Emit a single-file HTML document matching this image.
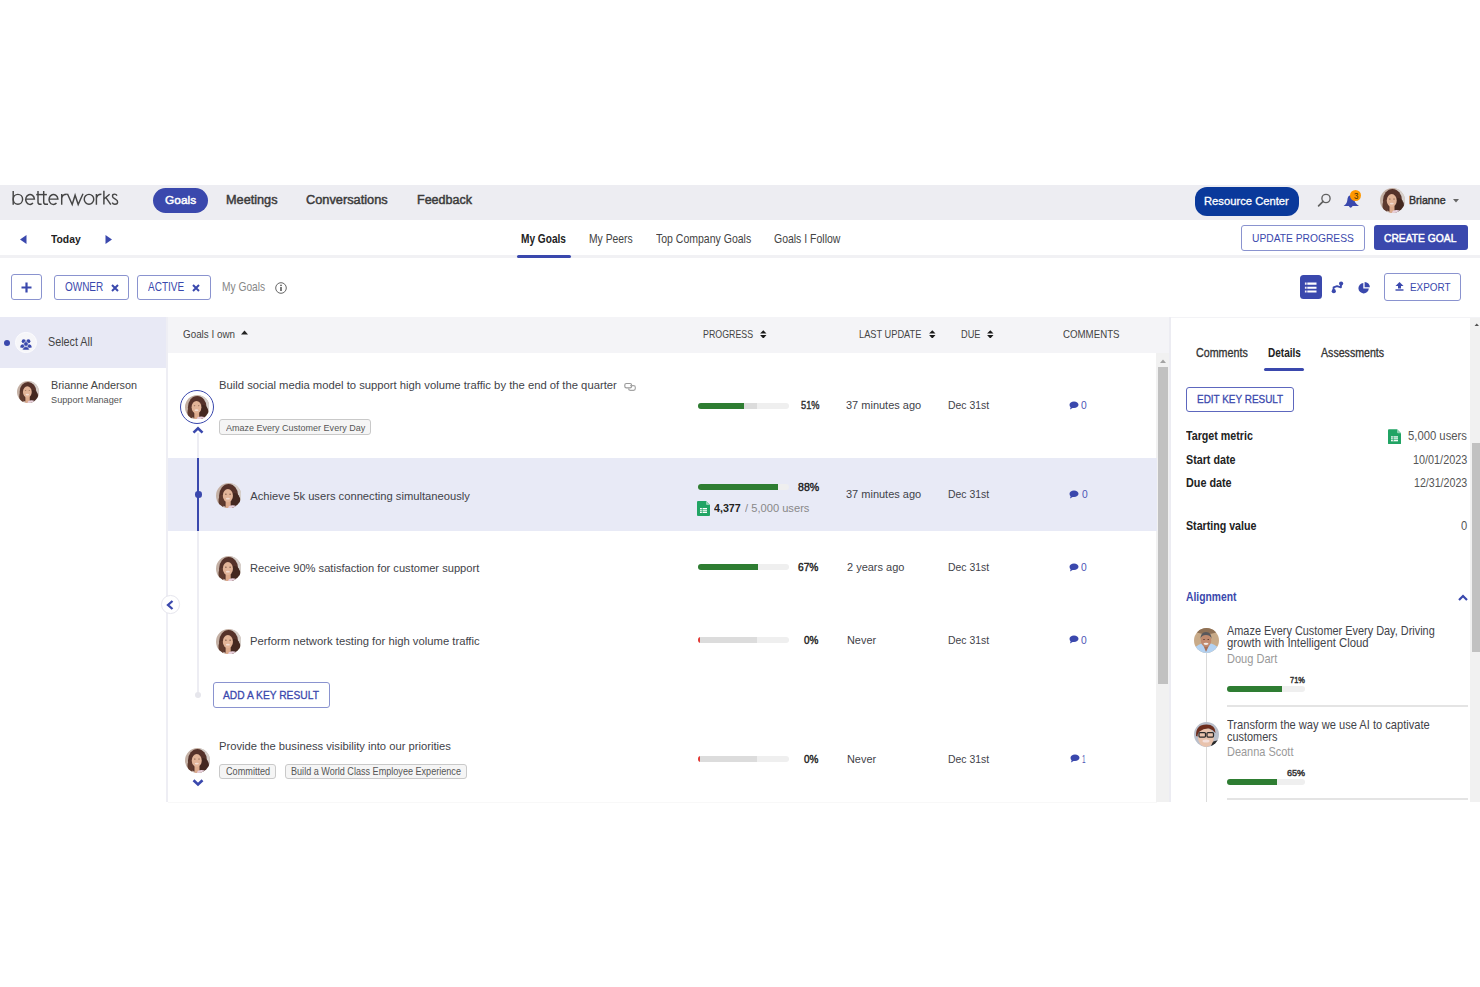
<!DOCTYPE html>
<html><head><meta charset="utf-8"><title>Betterworks Goals</title>
<style>
html,body{margin:0;padding:0;width:1480px;height:987px;overflow:hidden;background:#fff;}
body{position:relative;font-family:"Liberation Sans",sans-serif;}
.t{position:absolute;white-space:nowrap;line-height:1;}
</style></head><body>
<div style="position:absolute;left:0px;top:185px;width:1480px;height:35px;background:#ededf2"></div>
<svg style="position:absolute;left:0;top:185px" width="130" height="35" viewBox="0 185 130 35"><g fill="none" stroke="#454545" stroke-width="1.45" stroke-linecap="butt"><path d="M13.2 190.9V204.8"/><ellipse cx="17.9" cy="199.3" rx="4.7" ry="4.95"/><path d="M25.7 199.1H34.4A4.35 4.95 0 1 0 33 203.1"/><path d="M38 191V202.2Q38 204.3 40.3 204.3H41.6"/><path d="M43.7 191V202.2Q43.7 204.3 46 204.3H48"/><path d="M36.2 194.6H46.9"/><path d="M49 199.1H57.9A4.45 4.95 0 1 0 56.5 203.1"/><path d="M61.7 194V204.8M61.7 198.4Q62.2 194.3 66.8 194.3"/><path d="M67.4 193.8L72.2 204.5L75.1 195.2L78.2 204.5L83 193.8" stroke-linejoin="miter"/><ellipse cx="89" cy="199.3" rx="4.75" ry="4.95"/><path d="M96.4 194V204.8M96.4 198.4Q96.9 194.3 101.4 194.3"/><path d="M103.9 190.8V204.6M109.6 194.2L104.3 198.8M106 197.6L110.8 204.6"/><path d="M117 195.6Q116.2 194.1 114.6 194.1Q112.4 194.1 112.5 196.2Q112.6 197.6 114.6 198.7L116 199.5Q117.8 200.6 117.6 202.4Q117.3 204.3 114.9 204.3Q113 204.3 112.2 202.6"/></g></svg>
<div style="position:absolute;left:153px;top:188px;width:55px;height:25px;background:#3a48ad;border-radius:13px"></div>
<div class="t" style="left:164.82px;top:193.91px;font-size:11.77px;-webkit-text-stroke:0.45px #fff;color:#fff;transform:scaleX(1.0137);transform-origin:0 0;">Goals</div>
<div class="t" style="left:225.62px;top:194.40px;font-size:12.21px;-webkit-text-stroke:0.45px #3b3b3b;color:#3b3b3b;transform:scaleX(1.0399);transform-origin:0 0;">Meetings</div>
<div class="t" style="left:306.43px;top:194.30px;font-size:12.21px;-webkit-text-stroke:0.45px #3b3b3b;color:#3b3b3b;transform:scaleX(1.0478);transform-origin:0 0;">Conversations</div>
<div class="t" style="left:417.23px;top:194.30px;font-size:12.21px;-webkit-text-stroke:0.45px #3b3b3b;color:#3b3b3b;transform:scaleX(1.0240);transform-origin:0 0;">Feedback</div>
<div style="position:absolute;left:1195px;top:187px;width:104px;height:29px;background:#0a399b;border-radius:12px"></div>
<div class="t" style="left:1204.45px;top:195.63px;font-size:11.34px;-webkit-text-stroke:0.3px #fff;color:#fff;transform:scaleX(0.9906);transform-origin:0 0;">Resource Center</div>
<svg style="position:absolute;left:1316px;top:192px" width="16" height="16" viewBox="0 0 16 16"><circle cx="10" cy="6.5" r="4.1" fill="none" stroke="#616161" stroke-width="1.35"/><path d="M7.1 9.4L2.6 13.9" stroke="#616161" stroke-width="1.7" stroke-linecap="round"/></svg>
<svg style="position:absolute;left:1343px;top:193px" width="17" height="17" viewBox="0 0 17 17"><path d="M7.5 2.2C5.6 2.4 4.6 4.2 4.4 6.5C4.2 9.2 3.6 11 0.6 13.1H16C13 11 11.6 9.2 11.2 6.6C10.9 4.3 9.6 2.1 7.5 2.2Z" fill="#3a48ad"/><path d="M5.8 13.1Q7.6 16.5 9.6 13.1Z" fill="#3a48ad"/></svg>
<div style="position:absolute;left:1350.3px;top:190.4px;width:11px;height:11px;background:#ff9800;border-radius:50%"></div>
<div class="t" style="left:1354.00px;top:191.88px;font-size:8.43px;color:#4a3000;transform:scaleX(0.9404);transform-origin:0 0;">3</div>
<svg style="position:absolute;left:1380px;top:188px" width="25" height="25" viewBox="0 0 100 100"><defs><clipPath id="av1"><circle cx="50" cy="50" r="50"/></clipPath></defs><g clip-path="url(#av1)"><rect width="100" height="100" fill="#c4b0a4"/><rect x="60" width="40" height="100" fill="#d6cfca"/><ellipse cx="50" cy="50" rx="38" ry="46" fill="#55322a"/><ellipse cx="72" cy="70" rx="24" ry="30" fill="#442820"/><ellipse cx="22" cy="72" rx="12" ry="26" fill="#5e3a2e"/><path d="M38 70H58V100H38Z" fill="#dcaa8c"/><ellipse cx="47" cy="50" rx="20" ry="26" fill="#e2b498"/><ellipse cx="39" cy="44" rx="3.5" ry="2" fill="#85604e"/><ellipse cx="56" cy="44" rx="3.5" ry="2" fill="#85604e"/><ellipse cx="47" cy="62" rx="8" ry="3.5" fill="#f2dcd2"/><ellipse cx="66" cy="100" rx="18" ry="12" fill="#e8d0dc"/></g></svg>
<div class="t" style="left:1409.22px;top:194.19px;font-size:11.63px;-webkit-text-stroke:0.45px #333;color:#333;transform:scaleX(0.9124);transform-origin:0 0;">Brianne</div>
<svg style="position:absolute;left:1453px;top:199px" width="6" height="4" viewBox="0 0 6 4"><path d="M0 0H6L3 3.5Z" fill="#666"/></svg>
<div style="position:absolute;left:0px;top:220px;width:1480px;height:35px;background:#fff"></div>
<div style="position:absolute;left:0px;top:255px;width:1480px;height:3px;background:#f1f1f4"></div>
<svg style="position:absolute;left:20px;top:235px" width="7" height="9" viewBox="0 0 7 9"><path d="M6.5 0V9L0 4.5Z" fill="#3a48ad"/></svg>
<div class="t" style="left:50.70px;top:233.83px;font-size:11.34px;font-weight:700;color:#222;transform:scaleX(0.9128);transform-origin:0 0;">Today</div>
<svg style="position:absolute;left:105px;top:234.5px" width="7" height="9" viewBox="0 0 7 9"><path d="M0.5 0V9L7 4.5Z" fill="#3a48ad"/></svg>
<div class="t" style="left:521.40px;top:233.07px;font-size:12.06px;font-weight:700;color:#222;transform:scaleX(0.8392);transform-origin:0 0;">My Goals</div>
<div class="t" style="left:589.30px;top:233.07px;font-size:12.06px;color:#444;transform:scaleX(0.8574);transform-origin:0 0;">My Peers</div>
<div class="t" style="left:655.70px;top:233.07px;font-size:12.06px;color:#444;transform:scaleX(0.8719);transform-origin:0 0;">Top Company Goals</div>
<div class="t" style="left:774.00px;top:233.07px;font-size:12.06px;color:#444;transform:scaleX(0.8694);transform-origin:0 0;">Goals I Follow</div>
<div style="position:absolute;left:517px;top:255px;width:54px;height:3px;background:#3a48ad;border-radius:2px"></div>
<div style="position:absolute;left:1241px;top:225px;width:124px;height:26px;border:1.9px solid #8a93cf;border-radius:3px;box-sizing:border-box;background:#fff"></div>
<div class="t" style="left:1252.00px;top:231.91px;font-size:11.77px;color:#3a48ad;transform:scaleX(0.8725);transform-origin:0 0;">UPDATE PROGRESS</div>
<div style="position:absolute;left:1374px;top:225px;width:94px;height:25px;background:#3a48ad;border-radius:3px"></div>
<div class="t" style="left:1384.25px;top:231.91px;font-size:11.77px;-webkit-text-stroke:0.5px #fff;color:#fff;transform:scaleX(0.8747);transform-origin:0 0;">CREATE GOAL</div>
<div style="position:absolute;left:11px;top:274px;width:31px;height:26px;border:1.8px solid #8a93cf;border-radius:3px;box-sizing:border-box"></div>
<svg style="position:absolute;left:21px;top:282px" width="11" height="11" viewBox="0 0 11 11"><path d="M5.5 0.5V10.5M0.5 5.5H10.5" stroke="#3a48ad" stroke-width="2.2"/></svg>
<div style="position:absolute;left:54px;top:275px;width:75px;height:25px;border:1.8px solid #8a93cf;border-radius:3px;box-sizing:border-box"></div>
<div class="t" style="left:64.60px;top:280.97px;font-size:12.06px;color:#3a48ad;transform:scaleX(0.8278);transform-origin:0 0;">OWNER</div>
<svg style="position:absolute;left:110.5px;top:284px" width="8" height="8" viewBox="0 0 8 8"><path d="M1 1L7 7M7 1L1 7" stroke="#3a48ad" stroke-width="2"/></svg>
<div style="position:absolute;left:136.5px;top:275px;width:74px;height:25px;border:1.8px solid #8a93cf;border-radius:3px;box-sizing:border-box"></div>
<div class="t" style="left:147.50px;top:280.97px;font-size:12.06px;color:#3a48ad;transform:scaleX(0.8312);transform-origin:0 0;">ACTIVE</div>
<svg style="position:absolute;left:191.5px;top:284px" width="8" height="8" viewBox="0 0 8 8"><path d="M1 1L7 7M7 1L1 7" stroke="#3a48ad" stroke-width="2"/></svg>
<div class="t" style="left:221.80px;top:280.97px;font-size:12.06px;color:#888;transform:scaleX(0.8476);transform-origin:0 0;">My Goals</div>
<svg style="position:absolute;left:275px;top:282px" width="12" height="12" viewBox="0 0 12 12"><circle cx="6" cy="6" r="5.3" fill="none" stroke="#666" stroke-width="1"/><rect x="5.3" y="5" width="1.4" height="4" fill="#444"/><rect x="5.3" y="2.7" width="1.4" height="1.4" fill="#444"/></svg>
<div style="position:absolute;left:1299.5px;top:275.2px;width:22.5px;height:23.6px;background:#3a48ad;border-radius:3.5px"></div>
<svg style="position:absolute;left:1296px;top:272px" width="30" height="30" viewBox="1296 272 30 30"><path d="M1307.3 283.6H1316.5M1307.3 287.7H1316.5M1307.3 291.5H1316.5" stroke="#fff" stroke-width="2.1"/><path d="M1304.9 283.6H1306.6M1304.9 287.7H1306.6M1304.9 291.5H1306.6" stroke="#f3eef5" stroke-width="2.1"/></svg>
<svg style="position:absolute;left:1326px;top:276px" width="22" height="22" viewBox="1326 276 22 22"><circle cx="1333.8" cy="291.2" r="2.1" fill="#3a48ad"/><circle cx="1341.1" cy="283.6" r="2.1" fill="#3a48ad"/><path d="M1333.6 291V287.3L1337 286.2L1340.9 287.3V283.8" stroke="#3a48ad" stroke-width="1.9" fill="none" stroke-linejoin="round"/></svg>
<svg style="position:absolute;left:1354px;top:278px" width="20" height="20" viewBox="1354 278 20 20"><path d="M1363.3 283A5.2 5.2 0 1 0 1368.8 288.5H1363.3Z" fill="#3a48ad"/><path d="M1364.6 281.9A5.3 5.3 0 0 1 1369.9 287.2H1364.6Z" fill="#3a48ad"/></svg>
<div style="position:absolute;left:1384px;top:273px;width:77px;height:27.5px;border:1.8px solid #8a93cf;border-radius:3px;box-sizing:border-box"></div>
<svg style="position:absolute;left:1394.6px;top:282.4px" width="9" height="9" viewBox="0 0 9 9"><path d="M4.5 0L8.5 4H6V6.5H3V4H0.5Z" fill="#3a48ad"/><rect x="0.5" y="7.3" width="8" height="1.4" fill="#3a48ad"/></svg>
<div class="t" style="left:1410.40px;top:281.19px;font-size:11.63px;color:#3a48ad;transform:scaleX(0.8526);transform-origin:0 0;">EXPORT</div>
<div style="position:absolute;left:0px;top:317px;width:167px;height:485px;background:#fff"></div>
<div style="position:absolute;left:0px;top:317px;width:167px;height:50.8px;background:#e8e9f5"></div>
<div style="position:absolute;left:166px;top:317px;width:2px;height:485px;background:#eeeef4"></div>
<div style="position:absolute;left:3.7px;top:340px;width:6.4px;height:6.4px;background:#3a48ad;border-radius:50%"></div>
<div style="position:absolute;left:15px;top:331.8px;width:21.6px;height:21.6px;background:#f6f6f9;border-radius:50%;border:1.2px solid #fdfdff;box-sizing:border-box"></div>
<svg style="position:absolute;left:15px;top:332px" width="22" height="22" viewBox="15 332 22 22"><g fill="#3a48ad"><circle cx="23.7" cy="341.3" r="2.0"/><circle cx="28.4" cy="341.3" r="2.0"/><path d="M20.2 347.4Q20.4 344.2 23.2 344.2L25 345.2L23.5 348Z"/><path d="M31.7 347.4Q31.5 344.2 28.7 344.2L26.9 345.2L28.4 348Z"/><circle cx="25.95" cy="344.0" r="2.3" stroke="#f6f6f9" stroke-width="0.6"/><path d="M22.6 350Q22.8 346.6 25.95 346.6Q29.1 346.6 29.3 350Z" stroke="#f6f6f9" stroke-width="0.5"/></g></svg>
<div class="t" style="left:47.80px;top:336.32px;font-size:12.35px;color:#444;transform:scaleX(0.8733);transform-origin:0 0;">Select All</div>
<svg style="position:absolute;left:16.5px;top:381px" width="22" height="22" viewBox="0 0 100 100"><defs><clipPath id="av2"><circle cx="50" cy="50" r="50"/></clipPath></defs><g clip-path="url(#av2)"><rect width="100" height="100" fill="#c4b0a4"/><rect x="60" width="40" height="100" fill="#d6cfca"/><ellipse cx="50" cy="50" rx="38" ry="46" fill="#55322a"/><ellipse cx="72" cy="70" rx="24" ry="30" fill="#442820"/><ellipse cx="22" cy="72" rx="12" ry="26" fill="#5e3a2e"/><path d="M38 70H58V100H38Z" fill="#dcaa8c"/><ellipse cx="47" cy="50" rx="20" ry="26" fill="#e2b498"/><ellipse cx="39" cy="44" rx="3.5" ry="2" fill="#85604e"/><ellipse cx="56" cy="44" rx="3.5" ry="2" fill="#85604e"/><ellipse cx="47" cy="62" rx="8" ry="3.5" fill="#f2dcd2"/><ellipse cx="66" cy="100" rx="18" ry="12" fill="#e8d0dc"/></g></svg>
<div class="t" style="left:51.00px;top:379.19px;font-size:11.63px;color:#444;transform:scaleX(0.9303);transform-origin:0 0;">Brianne Anderson</div>
<div class="t" style="left:51.00px;top:394.93px;font-size:9.74px;color:#555;transform:scaleX(0.9438);transform-origin:0 0;">Support Manager</div>
<div style="position:absolute;left:168px;top:317px;width:1002px;height:36px;background:#f4f4f7"></div>
<div style="position:absolute;left:168px;top:353px;width:989px;height:449px;background:#fff"></div>
<div class="t" style="left:183.00px;top:327.89px;font-size:11.63px;color:#444;transform:scaleX(0.8470);transform-origin:0 0;">Goals I own</div>
<svg style="position:absolute;left:241px;top:330px" width="7" height="5" viewBox="0 0 7 5"><path d="M0 4.5H7L3.5 0.5Z" fill="#222"/></svg>
<div class="t" style="left:703.20px;top:329.10px;font-size:11.19px;color:#444;transform:scaleX(0.7895);transform-origin:0 0;">PROGRESS</div>
<svg style="position:absolute;left:760.1px;top:329.6px" width="6.6" height="8.8" viewBox="0 0 6.6 8.8"><path d="M0.1 3.6L3.3 0.2L6.5 3.6Z M0.1 5.0L3.3 8.6L6.5 5.0Z" fill="#1a1a1a"/></svg>
<div class="t" style="left:859.40px;top:329.10px;font-size:11.19px;color:#444;transform:scaleX(0.8266);transform-origin:0 0;">LAST UPDATE</div>
<svg style="position:absolute;left:929px;top:329.6px" width="6.6" height="8.8" viewBox="0 0 6.6 8.8"><path d="M0.1 3.6L3.3 0.2L6.5 3.6Z M0.1 5.0L3.3 8.6L6.5 5.0Z" fill="#1a1a1a"/></svg>
<div class="t" style="left:961.10px;top:329.10px;font-size:11.19px;color:#444;transform:scaleX(0.8215);transform-origin:0 0;">DUE</div>
<svg style="position:absolute;left:987.3px;top:329.6px" width="6.6" height="8.8" viewBox="0 0 6.6 8.8"><path d="M0.1 3.6L3.3 0.2L6.5 3.6Z M0.1 5.0L3.3 8.6L6.5 5.0Z" fill="#1a1a1a"/></svg>
<div class="t" style="left:1063.00px;top:329.10px;font-size:11.19px;color:#444;transform:scaleX(0.8667);transform-origin:0 0;">COMMENTS</div>
<div style="position:absolute;left:1156px;top:353px;width:13px;height:449px;background:#f1f1f1"></div>
<div style="position:absolute;left:1169px;top:317px;width:1.5px;height:485px;background:#ececf2"></div>
<div style="position:absolute;left:1158px;top:367px;width:10px;height:317px;background:#c1c1c1"></div>
<svg style="position:absolute;left:1160px;top:358.5px" width="6" height="4" viewBox="0 0 6 4"><path d="M0 4H6L3 0.5Z" fill="#a3a3a3"/></svg>
<div style="position:absolute;left:179.8px;top:389.9px;width:34.5px;height:34.5px;border:1.8px solid #3a48ad;border-radius:50%;box-sizing:border-box;background:#fff"></div>
<svg style="position:absolute;left:184.9px;top:394.9px" width="24.5" height="24.5" viewBox="0 0 100 100"><defs><clipPath id="av3"><circle cx="50" cy="50" r="50"/></clipPath></defs><g clip-path="url(#av3)"><rect width="100" height="100" fill="#c4b0a4"/><rect x="60" width="40" height="100" fill="#d6cfca"/><ellipse cx="50" cy="50" rx="38" ry="46" fill="#55322a"/><ellipse cx="72" cy="70" rx="24" ry="30" fill="#442820"/><ellipse cx="22" cy="72" rx="12" ry="26" fill="#5e3a2e"/><path d="M38 70H58V100H38Z" fill="#dcaa8c"/><ellipse cx="47" cy="50" rx="20" ry="26" fill="#e2b498"/><ellipse cx="39" cy="44" rx="3.5" ry="2" fill="#85604e"/><ellipse cx="56" cy="44" rx="3.5" ry="2" fill="#85604e"/><ellipse cx="47" cy="62" rx="8" ry="3.5" fill="#f2dcd2"/><ellipse cx="66" cy="100" rx="18" ry="12" fill="#e8d0dc"/></g></svg>
<svg style="position:absolute;left:192px;top:425.5px" width="12" height="8" viewBox="0 0 12 8"><path d="M1.5 6.6L6 2.3L10.5 6.6" stroke="#3a48ad" stroke-width="2.6" fill="none"/></svg>
<div style="position:absolute;left:197px;top:433px;width:2px;height:262px;background:#ededf3"></div>
<div style="position:absolute;left:194.8px;top:692px;width:6px;height:6px;background:#e6e6ec;border-radius:50%"></div>
<div class="t" style="left:219.30px;top:379.19px;font-size:11.63px;color:#3f4349;transform:scaleX(0.9684);transform-origin:0 0;">Build social media model to support high volume traffic by the end of the quarter</div>
<svg style="position:absolute;left:620px;top:380px" width="20" height="14" viewBox="620 380 20 14"><rect x="624.8" y="383.5" width="6.8" height="4.3" rx="1.6" fill="none" stroke="#9a9a9a" stroke-width="1.15"/><path d="M630.2 385.6H633.6Q635.3 385.6 635.3 387.3V388.6Q635.3 390.3 633.6 390.3H630.2Q628.5 390.3 628.5 388.6" fill="none" stroke="#a5a5a5" stroke-width="1.15"/></svg>
<div style="position:absolute;left:219.3px;top:419.3px;width:152px;height:15.5px;background:#f5f5f5;border:1px solid #c9c9c9;border-radius:3px;box-sizing:border-box"></div>
<div class="t" style="left:225.70px;top:422.56px;font-size:9.88px;color:#555;transform:scaleX(0.9122);transform-origin:0 0;">Amaze Every Customer Every Day</div>
<div style="position:absolute;left:698px;top:403px;width:90.5px;height:6.3px;border-radius:3.15px;background:#efefef;overflow:hidden"><div style="position:absolute;left:0;top:0;width:59px;height:6.3px;background:#dcdcdc"></div><div style="position:absolute;left:0;top:0;width:45.5px;height:6.3px;background:#2e7d32"></div></div>
<div class="t" style="left:800.52px;top:400.03px;font-size:11.34px;-webkit-text-stroke:0.45px #333;color:#333;transform:scaleX(0.8137);transform-origin:0 0;">51%</div>
<div class="t" style="left:846.00px;top:399.19px;font-size:11.63px;color:#3f4349;transform:scaleX(0.9455);transform-origin:0 0;">37 minutes ago</div>
<div class="t" style="left:947.70px;top:399.19px;font-size:11.63px;color:#3f4349;transform:scaleX(0.8960);transform-origin:0 0;">Dec 31st</div>
<svg style="position:absolute;left:1069px;top:400.5px" width="10" height="9" viewBox="0 0 10 9"><path d="M5 0.5C7.5 0.5 9.5 1.9 9.5 3.8C9.5 5.7 7.5 7.1 5 7.1C4.5 7.1 4 7 3.6 6.9L1 8.4L1.6 6.3C0.9 5.7 0.5 4.8 0.5 3.8C0.5 1.9 2.5 0.5 5 0.5Z" fill="#3a48ad"/></svg>
<div class="t" style="left:1081.30px;top:399.21px;font-size:11.77px;color:#4b55b5;transform:scaleX(0.8723);transform-origin:0 0;">0</div>
<div style="position:absolute;left:168px;top:458px;width:989px;height:73px;background:#e8eaf6"></div>
<div style="position:absolute;left:197px;top:458px;width:2px;height:73px;background:#3a48ad"></div>
<div style="position:absolute;left:195px;top:491px;width:6.5px;height:6.5px;background:#3a48ad;border-radius:50%"></div>
<svg style="position:absolute;left:215.7px;top:483px" width="25.3" height="25.3" viewBox="0 0 100 100"><defs><clipPath id="av4"><circle cx="50" cy="50" r="50"/></clipPath></defs><g clip-path="url(#av4)"><rect width="100" height="100" fill="#c4b0a4"/><rect x="60" width="40" height="100" fill="#d6cfca"/><ellipse cx="50" cy="50" rx="38" ry="46" fill="#55322a"/><ellipse cx="72" cy="70" rx="24" ry="30" fill="#442820"/><ellipse cx="22" cy="72" rx="12" ry="26" fill="#5e3a2e"/><path d="M38 70H58V100H38Z" fill="#dcaa8c"/><ellipse cx="47" cy="50" rx="20" ry="26" fill="#e2b498"/><ellipse cx="39" cy="44" rx="3.5" ry="2" fill="#85604e"/><ellipse cx="56" cy="44" rx="3.5" ry="2" fill="#85604e"/><ellipse cx="47" cy="62" rx="8" ry="3.5" fill="#f2dcd2"/><ellipse cx="66" cy="100" rx="18" ry="12" fill="#e8d0dc"/></g></svg>
<div class="t" style="left:250.30px;top:490.60px;font-size:11.19px;color:#3f4349;">Achieve 5k users connecting simultaneously</div>
<div style="position:absolute;left:698px;top:483.8px;width:90.5px;height:6.5px;border-radius:3.25px;background:#efefef;overflow:hidden"><div style="position:absolute;left:0;top:0;width:79.5px;height:6.5px;background:#2e7d32"></div></div>
<div class="t" style="left:797.83px;top:480.61px;font-size:11.77px;-webkit-text-stroke:0.45px #222;color:#222;transform:scaleX(0.8982);transform-origin:0 0;">88%</div>
<svg style="position:absolute;left:697px;top:501px" width="13" height="15" viewBox="0 0 13 15"><path d="M1 0H9L13 4V14Q13 15 12 15H1Q0 15 0 14V1Q0 0 1 0Z" fill="#21a464"/><path d="M9 0L13 4H10Q9 4 9 3Z" fill="#8ed1b1"/><rect x="3" y="7" width="7" height="5" fill="#fff"/><path d="M3 8.6H10M3 10.3H10M5.3 7V12" stroke="#21a464" stroke-width="0.7"/></svg>
<div class="t" style="left:714.00px;top:503.18px;font-size:11.05px;font-weight:700;color:#222;transform:scaleX(0.9685);transform-origin:0 0;">4,377</div>
<div class="t" style="left:744.60px;top:503.18px;font-size:11.05px;color:#888;transform:scaleX(1.0086);transform-origin:0 0;">/ 5,000 users</div>
<div class="t" style="left:846.20px;top:487.79px;font-size:11.63px;color:#3f4349;transform:scaleX(0.9455);transform-origin:0 0;">37 minutes ago</div>
<div class="t" style="left:947.70px;top:487.79px;font-size:11.63px;color:#3f4349;transform:scaleX(0.8960);transform-origin:0 0;">Dec 31st</div>
<svg style="position:absolute;left:1069px;top:489.5px" width="10" height="9" viewBox="0 0 10 9"><path d="M5 0.5C7.5 0.5 9.5 1.9 9.5 3.8C9.5 5.7 7.5 7.1 5 7.1C4.5 7.1 4 7 3.6 6.9L1 8.4L1.6 6.3C0.9 5.7 0.5 4.8 0.5 3.8C0.5 1.9 2.5 0.5 5 0.5Z" fill="#3a48ad"/></svg>
<div class="t" style="left:1081.60px;top:487.71px;font-size:11.77px;color:#4b55b5;transform:scaleX(0.8723);transform-origin:0 0;">0</div>
<svg style="position:absolute;left:215.8px;top:555.8px" width="25.3" height="25.3" viewBox="0 0 100 100"><defs><clipPath id="av5"><circle cx="50" cy="50" r="50"/></clipPath></defs><g clip-path="url(#av5)"><rect width="100" height="100" fill="#c4b0a4"/><rect x="60" width="40" height="100" fill="#d6cfca"/><ellipse cx="50" cy="50" rx="38" ry="46" fill="#55322a"/><ellipse cx="72" cy="70" rx="24" ry="30" fill="#442820"/><ellipse cx="22" cy="72" rx="12" ry="26" fill="#5e3a2e"/><path d="M38 70H58V100H38Z" fill="#dcaa8c"/><ellipse cx="47" cy="50" rx="20" ry="26" fill="#e2b498"/><ellipse cx="39" cy="44" rx="3.5" ry="2" fill="#85604e"/><ellipse cx="56" cy="44" rx="3.5" ry="2" fill="#85604e"/><ellipse cx="47" cy="62" rx="8" ry="3.5" fill="#f2dcd2"/><ellipse cx="66" cy="100" rx="18" ry="12" fill="#e8d0dc"/></g></svg>
<div class="t" style="left:250.30px;top:562.11px;font-size:11.77px;color:#3f4349;transform:scaleX(0.9449);transform-origin:0 0;">Receive 90% satisfaction for customer support</div>
<div style="position:absolute;left:698px;top:563.8px;width:90.5px;height:6.7px;border-radius:3.35px;background:#efefef;overflow:hidden"><div style="position:absolute;left:0;top:0;width:60.4px;height:6.7px;background:#2e7d32"></div></div>
<div class="t" style="left:798.23px;top:561.49px;font-size:11.63px;-webkit-text-stroke:0.45px #222;color:#222;transform:scaleX(0.8750);transform-origin:0 0;">67%</div>
<div class="t" style="left:846.50px;top:561.19px;font-size:11.63px;color:#3f4349;transform:scaleX(0.9448);transform-origin:0 0;">2 years ago</div>
<div class="t" style="left:947.60px;top:561.19px;font-size:11.63px;color:#3f4349;transform:scaleX(0.8960);transform-origin:0 0;">Dec 31st</div>
<svg style="position:absolute;left:1069px;top:562.5px" width="10" height="9" viewBox="0 0 10 9"><path d="M5 0.5C7.5 0.5 9.5 1.9 9.5 3.8C9.5 5.7 7.5 7.1 5 7.1C4.5 7.1 4 7 3.6 6.9L1 8.4L1.6 6.3C0.9 5.7 0.5 4.8 0.5 3.8C0.5 1.9 2.5 0.5 5 0.5Z" fill="#3a48ad"/></svg>
<div class="t" style="left:1081.30px;top:561.11px;font-size:11.77px;color:#4b55b5;transform:scaleX(0.8723);transform-origin:0 0;">0</div>
<svg style="position:absolute;left:215.8px;top:628.6px" width="25.3" height="25.3" viewBox="0 0 100 100"><defs><clipPath id="av6"><circle cx="50" cy="50" r="50"/></clipPath></defs><g clip-path="url(#av6)"><rect width="100" height="100" fill="#c4b0a4"/><rect x="60" width="40" height="100" fill="#d6cfca"/><ellipse cx="50" cy="50" rx="38" ry="46" fill="#55322a"/><ellipse cx="72" cy="70" rx="24" ry="30" fill="#442820"/><ellipse cx="22" cy="72" rx="12" ry="26" fill="#5e3a2e"/><path d="M38 70H58V100H38Z" fill="#dcaa8c"/><ellipse cx="47" cy="50" rx="20" ry="26" fill="#e2b498"/><ellipse cx="39" cy="44" rx="3.5" ry="2" fill="#85604e"/><ellipse cx="56" cy="44" rx="3.5" ry="2" fill="#85604e"/><ellipse cx="47" cy="62" rx="8" ry="3.5" fill="#f2dcd2"/><ellipse cx="66" cy="100" rx="18" ry="12" fill="#e8d0dc"/></g></svg>
<div class="t" style="left:250.30px;top:634.91px;font-size:11.77px;color:#3f4349;transform:scaleX(0.9577);transform-origin:0 0;">Perform network testing for high volume traffic</div>
<div style="position:absolute;left:698px;top:636.5px;width:90.5px;height:6.7px;border-radius:3.35px;background:#efefef;overflow:hidden"><div style="position:absolute;left:0;top:0;width:59px;height:6.7px;background:#dcdcdc"></div><div style="position:absolute;left:0;top:0;width:1.5px;height:6.7px;background:#e53935"></div></div>
<div class="t" style="left:804.23px;top:634.19px;font-size:11.63px;-webkit-text-stroke:0.45px #222;color:#222;transform:scaleX(0.8540);transform-origin:0 0;">0%</div>
<div class="t" style="left:846.50px;top:634.19px;font-size:11.63px;color:#3f4349;transform:scaleX(0.9373);transform-origin:0 0;">Never</div>
<div class="t" style="left:947.60px;top:634.19px;font-size:11.63px;color:#3f4349;transform:scaleX(0.8960);transform-origin:0 0;">Dec 31st</div>
<svg style="position:absolute;left:1069px;top:635px" width="10" height="9" viewBox="0 0 10 9"><path d="M5 0.5C7.5 0.5 9.5 1.9 9.5 3.8C9.5 5.7 7.5 7.1 5 7.1C4.5 7.1 4 7 3.6 6.9L1 8.4L1.6 6.3C0.9 5.7 0.5 4.8 0.5 3.8C0.5 1.9 2.5 0.5 5 0.5Z" fill="#3a48ad"/></svg>
<div class="t" style="left:1081.30px;top:633.71px;font-size:11.77px;color:#4b55b5;transform:scaleX(0.8723);transform-origin:0 0;">0</div>
<div style="position:absolute;left:212.8px;top:682.3px;width:117px;height:25.7px;border:1.8px solid #8a93cf;border-radius:3px;box-sizing:border-box"></div>
<div class="t" style="left:223.45px;top:690.06px;font-size:11.48px;-webkit-text-stroke:0.3px #3a48ad;color:#3a48ad;transform:scaleX(0.8937);transform-origin:0 0;">ADD A KEY RESULT</div>
<div style="position:absolute;left:161.2px;top:595px;width:18.5px;height:18.5px;background:#fff;border:1px solid #e6e6ee;border-radius:50%;box-sizing:border-box"></div>
<svg style="position:absolute;left:166px;top:599.5px" width="8" height="10" viewBox="0 0 8 10"><path d="M6.5 1L2 5L6.5 9" stroke="#3a48ad" stroke-width="2.3" fill="none"/></svg>
<svg style="position:absolute;left:184.6px;top:747.7px" width="25" height="25" viewBox="0 0 100 100"><defs><clipPath id="av7"><circle cx="50" cy="50" r="50"/></clipPath></defs><g clip-path="url(#av7)"><rect width="100" height="100" fill="#c4b0a4"/><rect x="60" width="40" height="100" fill="#d6cfca"/><ellipse cx="50" cy="50" rx="38" ry="46" fill="#55322a"/><ellipse cx="72" cy="70" rx="24" ry="30" fill="#442820"/><ellipse cx="22" cy="72" rx="12" ry="26" fill="#5e3a2e"/><path d="M38 70H58V100H38Z" fill="#dcaa8c"/><ellipse cx="47" cy="50" rx="20" ry="26" fill="#e2b498"/><ellipse cx="39" cy="44" rx="3.5" ry="2" fill="#85604e"/><ellipse cx="56" cy="44" rx="3.5" ry="2" fill="#85604e"/><ellipse cx="47" cy="62" rx="8" ry="3.5" fill="#f2dcd2"/><ellipse cx="66" cy="100" rx="18" ry="12" fill="#e8d0dc"/></g></svg>
<svg style="position:absolute;left:192px;top:778.5px" width="12" height="8" viewBox="0 0 12 8"><path d="M1.5 1.2L6 5.5L10.5 1.2" stroke="#3a48ad" stroke-width="2.6" fill="none"/></svg>
<div class="t" style="left:219.30px;top:740.41px;font-size:11.77px;color:#3f4349;transform:scaleX(0.9535);transform-origin:0 0;">Provide the business visibility into our priorities</div>
<div style="position:absolute;left:219.3px;top:763.5px;width:57px;height:15.3px;background:#f5f5f5;border:1px solid #c9c9c9;border-radius:3px;box-sizing:border-box"></div>
<div class="t" style="left:225.70px;top:766.77px;font-size:10.47px;color:#555;transform:scaleX(0.8735);transform-origin:0 0;">Committed</div>
<div style="position:absolute;left:284.7px;top:763.5px;width:182.5px;height:15.3px;background:#f5f5f5;border:1px solid #c9c9c9;border-radius:3px;box-sizing:border-box"></div>
<div class="t" style="left:291.20px;top:766.77px;font-size:10.47px;color:#555;transform:scaleX(0.8675);transform-origin:0 0;">Build a World Class Employee Experience</div>
<div style="position:absolute;left:698px;top:755.6px;width:90.5px;height:6.2px;border-radius:3.1px;background:#efefef;overflow:hidden"><div style="position:absolute;left:0;top:0;width:59px;height:6.2px;background:#dcdcdc"></div><div style="position:absolute;left:0;top:0;width:1.5px;height:6.2px;background:#e53935"></div></div>
<div class="t" style="left:804.23px;top:752.69px;font-size:11.63px;-webkit-text-stroke:0.45px #222;color:#222;transform:scaleX(0.8540);transform-origin:0 0;">0%</div>
<div class="t" style="left:846.50px;top:752.69px;font-size:11.63px;color:#3f4349;transform:scaleX(0.9373);transform-origin:0 0;">Never</div>
<div class="t" style="left:947.60px;top:752.69px;font-size:11.63px;color:#3f4349;transform:scaleX(0.8960);transform-origin:0 0;">Dec 31st</div>
<svg style="position:absolute;left:1070px;top:753.5px" width="10" height="9" viewBox="0 0 10 9"><path d="M5 0.5C7.5 0.5 9.5 1.9 9.5 3.8C9.5 5.7 7.5 7.1 5 7.1C4.5 7.1 4 7 3.6 6.9L1 8.4L1.6 6.3C0.9 5.7 0.5 4.8 0.5 3.8C0.5 1.9 2.5 0.5 5 0.5Z" fill="#3a48ad"/></svg>
<div class="t" style="left:1082.40px;top:752.61px;font-size:11.77px;color:#4b55b5;transform:scaleX(0.5510);transform-origin:0 0;">1</div>
<div style="position:absolute;left:168px;top:801.5px;width:989px;height:1.5px;background:#f8f8f8"></div>
<div style="position:absolute;left:1170.5px;top:316.5px;width:309.5px;height:1.5px;background:#f3f3f6"></div>
<div style="position:absolute;left:1170.5px;top:318px;width:299.5px;height:484px;background:#fff"></div>
<div style="position:absolute;left:1470px;top:318px;width:10px;height:484px;background:#f1f1f1"></div>
<div style="position:absolute;left:1471.5px;top:443px;width:8.5px;height:209px;background:#c1c1c1"></div>
<svg style="position:absolute;left:1473.6px;top:322.6px" width="5.5" height="3.6" viewBox="0 0 6 4"><path d="M0 4H6L3 0.5Z" fill="#505050"/></svg>
<div class="t" style="left:1196.05px;top:346.82px;font-size:12.35px;-webkit-text-stroke:0.3px #333;color:#333;transform:scaleX(0.8672);transform-origin:0 0;">Comments</div>
<div class="t" style="left:1267.80px;top:346.82px;font-size:12.35px;font-weight:700;color:#222;transform:scaleX(0.8143);transform-origin:0 0;">Details</div>
<div class="t" style="left:1320.95px;top:346.82px;font-size:12.35px;-webkit-text-stroke:0.3px #333;color:#333;transform:scaleX(0.8591);transform-origin:0 0;">Assessments</div>
<div style="position:absolute;left:1264.4px;top:367.8px;width:40px;height:3px;background:#3a48ad;border-radius:2px"></div>
<div style="position:absolute;left:1186px;top:387.4px;width:108px;height:24.5px;border:1.8px solid #5d67be;border-radius:3px;box-sizing:border-box"></div>
<div class="t" style="left:1196.65px;top:394.46px;font-size:11.48px;-webkit-text-stroke:0.3px #3a48ad;color:#3a48ad;transform:scaleX(0.8669);transform-origin:0 0;">EDIT KEY RESULT</div>
<div class="t" style="left:1186.30px;top:430.74px;font-size:11.92px;font-weight:700;color:#222;transform:scaleX(0.8980);transform-origin:0 0;">Target metric</div>
<svg style="position:absolute;left:1388.3px;top:428.7px" width="13" height="15.6" viewBox="0 0 13 15"><path d="M1 0H9L13 4V14Q13 15 12 15H1Q0 15 0 14V1Q0 0 1 0Z" fill="#21a464"/><path d="M9 0L13 4H10Q9 4 9 3Z" fill="#8ed1b1"/><rect x="3" y="7" width="7" height="5" fill="#fff"/><path d="M3 8.6H10M3 10.3H10M5.3 7V12" stroke="#21a464" stroke-width="0.7"/></svg>
<div class="t" style="left:1408.30px;top:430.74px;font-size:11.92px;color:#555;transform:scaleX(0.9474);transform-origin:0 0;">5,000 users</div>
<div class="t" style="left:1186.30px;top:454.84px;font-size:11.92px;font-weight:700;color:#222;transform:scaleX(0.8999);transform-origin:0 0;">Start date</div>
<div class="t" style="left:1413.00px;top:454.84px;font-size:11.92px;color:#555;transform:scaleX(0.9103);transform-origin:0 0;">10/01/2023</div>
<div class="t" style="left:1186.30px;top:477.94px;font-size:11.92px;font-weight:700;color:#222;transform:scaleX(0.9075);transform-origin:0 0;">Due date</div>
<div class="t" style="left:1414.00px;top:477.94px;font-size:11.92px;color:#555;transform:scaleX(0.8935);transform-origin:0 0;">12/31/2023</div>
<div class="t" style="left:1186.30px;top:521.24px;font-size:11.92px;font-weight:700;color:#222;transform:scaleX(0.8942);transform-origin:0 0;">Starting value</div>
<div class="t" style="left:1461.00px;top:521.24px;font-size:11.92px;color:#555;transform:scaleX(0.9373);transform-origin:0 0;">0</div>
<div class="t" style="left:1186.30px;top:591.54px;font-size:11.92px;font-weight:700;color:#3a48ad;transform:scaleX(0.8665);transform-origin:0 0;">Alignment</div>
<svg style="position:absolute;left:1457.5px;top:593.5px" width="10" height="7" viewBox="0 0 10 7"><path d="M1 6L5 2L9 6" stroke="#3a48ad" stroke-width="2.2" fill="none"/></svg>
<div style="position:absolute;left:1205.6px;top:653px;width:1.6px;height:149px;background:#dadada"></div>
<svg style="position:absolute;left:1194px;top:627.8px" width="25" height="25" viewBox="0 0 100 100"><defs><clipPath id="av8"><circle cx="50" cy="50" r="50"/></clipPath></defs><g clip-path="url(#av8)"><rect width="100" height="100" fill="#c8aa88"/><ellipse cx="50" cy="8" rx="50" ry="16" fill="#8f7156"/><ellipse cx="50" cy="104" rx="56" ry="44" fill="#b3d2f2"/><path d="M36 66L48 96L62 66Z" fill="#a87056"/><ellipse cx="48" cy="50" rx="21" ry="26" fill="#c18a6e"/><path d="M26 44Q26 16 48 16Q70 16 70 44Q66 28 48 28Q30 28 26 44Z" fill="#58585c"/><ellipse cx="48" cy="63" rx="10" ry="4.5" fill="#f3ebe6"/><ellipse cx="40" cy="46" rx="3.5" ry="2" fill="#5a3a30"/><ellipse cx="57" cy="46" rx="3.5" ry="2" fill="#5a3a30"/></g></svg>
<div class="t" style="left:1227.00px;top:626.14px;font-size:11.92px;color:#3f4349;transform:scaleX(0.9163);transform-origin:0 0;">Amaze Every Customer Every Day, Driving</div>
<div class="t" style="left:1227.00px;top:637.54px;font-size:11.92px;color:#3f4349;transform:scaleX(0.9507);transform-origin:0 0;">growth with Intelligent Cloud</div>
<div class="t" style="left:1227.00px;top:654.04px;font-size:11.92px;color:#999;transform:scaleX(0.9273);transform-origin:0 0;">Doug Dart</div>
<div class="t" style="left:1289.62px;top:675.99px;font-size:9.01px;-webkit-text-stroke:0.45px #333;color:#333;transform:scaleX(0.8295);transform-origin:0 0;">71%</div>
<div style="position:absolute;left:1226.5px;top:686px;width:78.3px;height:6.3px;border-radius:3.15px;background:#efefef;overflow:hidden"><div style="position:absolute;left:0;top:0;width:55px;height:6.3px;background:#2e7d32"></div></div>
<div style="position:absolute;left:1226.5px;top:705px;width:241px;height:1.5px;background:#e4e4e4"></div>
<svg style="position:absolute;left:1194px;top:722px" width="25" height="25" viewBox="0 0 100 100"><defs><clipPath id="av9"><circle cx="50" cy="50" r="50"/></clipPath></defs><g clip-path="url(#av9)"><rect width="100" height="100" fill="#b9bfcb"/><path d="M68 80L100 72V100H70Z" fill="#2a2a2a"/><ellipse cx="48" cy="62" rx="32" ry="38" fill="#e9c3ad"/><path d="M8 56Q6 10 50 10Q86 10 86 44Q76 30 60 26Q40 24 22 38Q14 46 14 58Z" fill="#6e2e1e"/><rect x="20" y="42" width="26" height="18" rx="4" fill="none" stroke="#2a2a2a" stroke-width="5"/><rect x="52" y="42" width="26" height="18" rx="4" fill="none" stroke="#2a2a2a" stroke-width="5"/><ellipse cx="48" cy="76" rx="14" ry="6" fill="#f4e0dc"/></g></svg>
<div class="t" style="left:1227.00px;top:719.74px;font-size:11.92px;color:#3f4349;transform:scaleX(0.9333);transform-origin:0 0;">Transform the way we use AI to captivate</div>
<div class="t" style="left:1227.00px;top:731.54px;font-size:11.92px;color:#3f4349;transform:scaleX(0.9172);transform-origin:0 0;">customers</div>
<div class="t" style="left:1227.00px;top:746.54px;font-size:11.92px;color:#999;transform:scaleX(0.9207);transform-origin:0 0;">Deanna Scott</div>
<div class="t" style="left:1286.52px;top:768.06px;font-size:9.88px;-webkit-text-stroke:0.45px #333;color:#333;transform:scaleX(0.9131);transform-origin:0 0;">65%</div>
<div style="position:absolute;left:1226.5px;top:779px;width:78.3px;height:6.3px;border-radius:3.15px;background:#efefef;overflow:hidden"><div style="position:absolute;left:0;top:0;width:50px;height:6.3px;background:#2e7d32"></div></div>
<div style="position:absolute;left:1226.5px;top:798px;width:241px;height:1.5px;background:#e4e4e4"></div>
</body></html>
